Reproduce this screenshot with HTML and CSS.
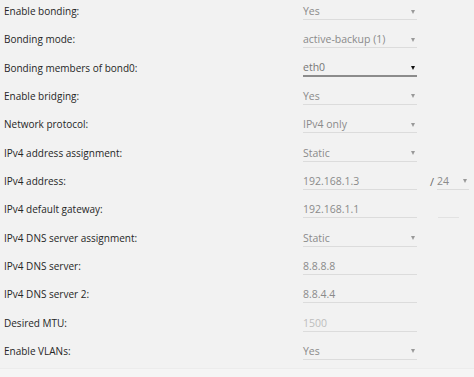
FILE: index.html
```html
<!DOCTYPE html>
<html>
<head>
  <title>Interface settings</title>
  <link rel="stylesheet" href="styles.css">
</head>
<body>
  <div class="form">
    <div class="row">
      <div class="label">Enable bonding:</div>
      <div class="field select"><span class="value">Yes</span><span class="arrow"></span></div>
    </div>
    <div class="row">
      <div class="label">Bonding mode:</div>
      <div class="field select"><span class="value">active-backup (1)</span><span class="arrow"></span></div>
    </div>
    <div class="row">
      <div class="label">Bonding members of bond0:</div>
      <div class="field select focused"><span class="value">eth0</span><span class="arrow"></span></div>
    </div>
    <div class="row">
      <div class="label">Enable bridging:</div>
      <div class="field select"><span class="value">Yes</span><span class="arrow"></span></div>
    </div>
    <div class="row">
      <div class="label">Network protocol:</div>
      <div class="field select"><span class="value">IPv4 only</span><span class="arrow"></span></div>
    </div>
    <div class="row">
      <div class="label">IPv4 address assignment:</div>
      <div class="field select"><span class="value">Static</span><span class="arrow"></span></div>
    </div>
    <div class="row">
      <div class="label">IPv4 address:</div>
      <div class="field"><span class="value">192.168.1.3</span></div>
      <div class="slash">/</div>
      <div class="mask select"><span class="value">24</span><span class="arrow"></span></div>
    </div>
    <div class="row">
      <div class="label">IPv4 default gateway:</div>
      <div class="field"><span class="value">192.168.1.1</span></div>
      <div class="mask-empty"></div>
    </div>
    <div class="row">
      <div class="label">IPv4 DNS server assignment:</div>
      <div class="field select"><span class="value">Static</span><span class="arrow"></span></div>
    </div>
    <div class="row">
      <div class="label">IPv4 DNS server:</div>
      <div class="field"><span class="value">8.8.8.8</span></div>
    </div>
    <div class="row">
      <div class="label">IPv4 DNS server 2:</div>
      <div class="field"><span class="value">8.8.4.4</span></div>
    </div>
    <div class="row">
      <div class="label">Desired MTU:</div>
      <div class="field"><span class="value placeholder">1500</span></div>
    </div>
    <div class="row">
      <div class="label">Enable VLANs:</div>
      <div class="field select"><span class="value">Yes</span><span class="arrow"></span></div>
    </div>
  </div>
  <div class="footer"></div>
</body>
</html>
```

FILE: styles.css
```css
body {margin: 0; background-color: #f2f2f2; font-family: 'Open Sans', sans-serif; font-size: 10px; overflow: hidden;}
.form {padding-left: 4px;}
.row {display: flex; align-items: flex-start; height: 28.33px; padding-top: 4px; box-sizing: border-box;}
.label {width: 299px; line-height: 14px; color: #262626;}
.field {display: flex; justify-content: space-between; align-items: center; width: 114px; height: 16px; box-sizing: border-box; border-bottom: 1px solid #dcdcdc; color: #8a8a8a;}
.value {line-height: 15px; font-size: 10.5px;}
.placeholder {color: #bdbdbd;}
.arrow {width: 0; height: 0; margin-right: 2px; border-left: 2.5px solid transparent; border-right: 2.5px solid transparent; border-top: 4px solid #999;}
.focused {border-bottom: 2px solid #8c8c8c;}
.focused .value {color: #777;}
.focused .arrow {border-top-color: #111;}
.slash {width: 20px; text-align: right; padding-right: 3px; box-sizing: border-box; line-height: 15px; font-size: 11px; color: #666;}
.mask {display: flex; justify-content: space-between; align-items: center; width: 32px; height: 16px; box-sizing: border-box; border-bottom: 1px solid #dcdcdc; color: #8a8a8a;}
.mask-empty {margin-left: 21px; width: 21px; height: 15px; border-bottom: 1px solid #e2e2e2;}
.footer {height: 10px; background-color: #f5f5f5; border-top: 1px solid #ececec;}
```
